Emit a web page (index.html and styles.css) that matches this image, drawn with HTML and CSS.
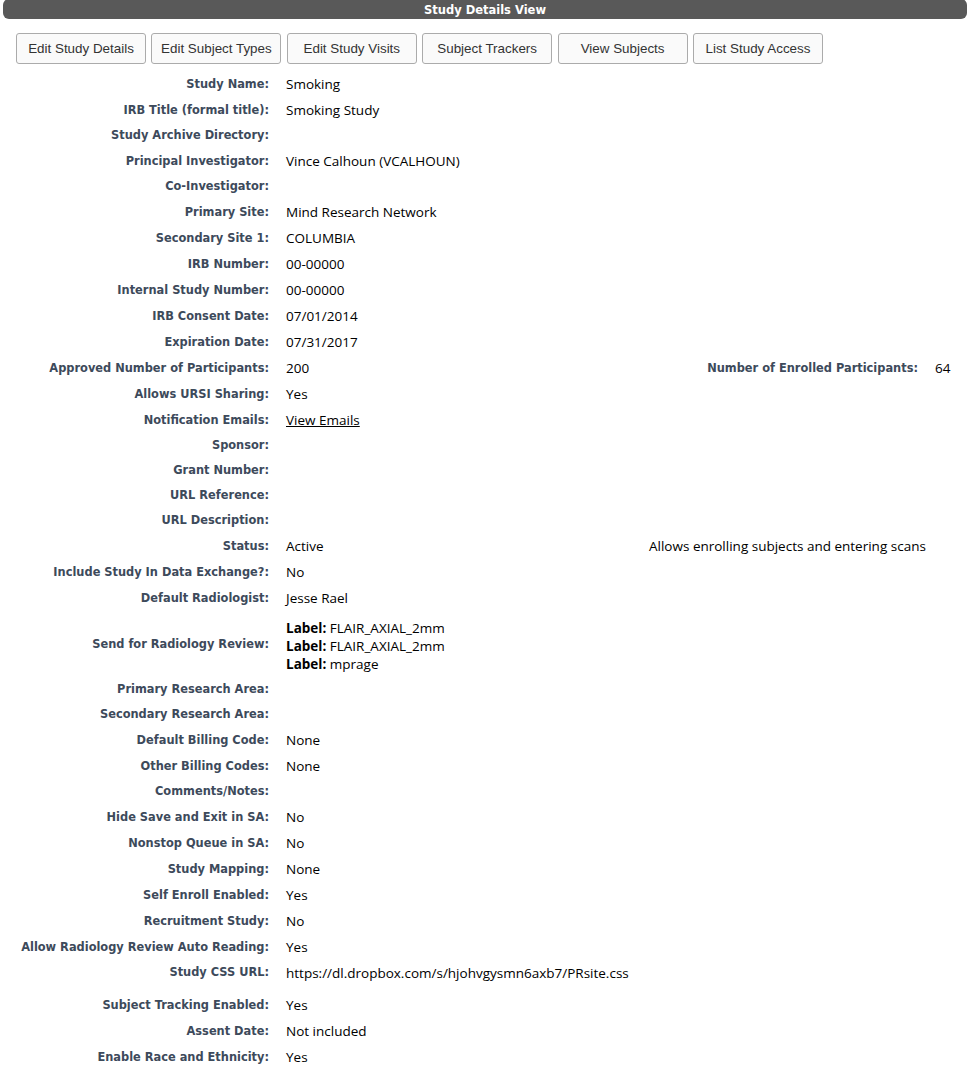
FILE: index.html
```html
<!DOCTYPE html>
<html lang="en">
<head>
	<meta charset="UTF-8">
	<title>Study Details View</title>
	<link rel="stylesheet" href="styles.css">
</head>
<body>
	<div class="page">
		<div class="titlebar">Study Details View</div>

		<div class="toolbar">
			<button class="btn">Edit Study Details</button>
			<button class="btn">Edit Subject Types</button>
			<button class="btn">Edit Study Visits</button>
			<button class="btn">Subject Trackers</button>
			<button class="btn">View Subjects</button>
			<button class="btn">List Study Access</button>
		</div>
	</div>

	<table class="details">
		<colgroup>
			<col class="c1">
			<col class="c2">
			<col class="c3">
			<col class="c4">
		</colgroup>
		<tr><th>Study Name:</th><td colspan="3">Smoking</td></tr>
		<tr><th>IRB Title (formal title):</th><td colspan="3">Smoking Study</td></tr>
		<tr><th>Study Archive Directory:</th><td colspan="3" class="empty"></td></tr>
		<tr><th>Principal Investigator:</th><td colspan="3">Vince Calhoun (VCALHOUN)</td></tr>
		<tr><th>Co-Investigator:</th><td colspan="3" class="empty"></td></tr>
		<tr><th>Primary Site:</th><td colspan="3">Mind Research Network</td></tr>
		<tr><th>Secondary Site 1:</th><td colspan="3">COLUMBIA</td></tr>
		<tr><th>IRB Number:</th><td colspan="3">00-00000</td></tr>
		<tr><th>Internal Study Number:</th><td colspan="3">00-00000</td></tr>
		<tr><th>IRB Consent Date:</th><td colspan="3">07/01/2014</td></tr>
		<tr><th>Expiration Date:</th><td colspan="3">07/31/2017</td></tr>
		<tr>
			<th>Approved Number of Participants:</th><td>200</td>
			<th>Number of Enrolled Participants:</th><td>64</td>
		</tr>
		<tr><th>Allows URSI Sharing:</th><td colspan="3">Yes</td></tr>
		<tr><th>Notification Emails:</th><td colspan="3"><a href="#" class="link">View Emails</a></td></tr>
		<tr><th>Sponsor:</th><td colspan="3" class="empty"></td></tr>
		<tr><th>Grant Number:</th><td colspan="3" class="empty"></td></tr>
		<tr><th>URL Reference:</th><td colspan="3" class="empty"></td></tr>
		<tr><th>URL Description:</th><td colspan="3" class="empty"></td></tr>
		<tr><th>Status:</th><td>Active</td><td colspan="2" class="note">Allows enrolling subjects and entering scans</td></tr>
		<tr><th>Include Study In Data Exchange?:</th><td colspan="3">No</td></tr>
		<tr><th>Default Radiologist:</th><td colspan="3">Jesse Rael</td></tr>
		<tr>
			<th>Send for Radiology Review:</th>
			<td colspan="3" class="multi">
				<div><b>Label:</b> FLAIR_AXIAL_2mm</div>
				<div><b>Label:</b> FLAIR_AXIAL_2mm</div>
				<div><b>Label:</b> mprage</div>
			</td>
		</tr>
		<tr><th>Primary Research Area:</th><td colspan="3" class="empty"></td></tr>
		<tr><th>Secondary Research Area:</th><td colspan="3" class="empty"></td></tr>
		<tr><th>Default Billing Code:</th><td colspan="3">None</td></tr>
		<tr><th>Other Billing Codes:</th><td colspan="3">None</td></tr>
		<tr><th>Comments/Notes:</th><td colspan="3" class="empty"></td></tr>
		<tr><th>Hide Save and Exit in SA:</th><td colspan="3">No</td></tr>
		<tr><th>Nonstop Queue in SA:</th><td colspan="3">No</td></tr>
		<tr><th>Study Mapping:</th><td colspan="3">None</td></tr>
		<tr><th>Self Enroll Enabled:</th><td colspan="3">Yes</td></tr>
		<tr><th>Recruitment Study:</th><td colspan="3">No</td></tr>
		<tr><th>Allow Radiology Review Auto Reading:</th><td colspan="3">Yes</td></tr>
		<tr class="tall"><th>Study CSS URL:</th><td colspan="3">https://dl.dropbox.com/s/hjohvgysmn6axb7/PRsite.css</td></tr>
		<tr><th>Subject Tracking Enabled:</th><td colspan="3">Yes</td></tr>
		<tr><th>Assent Date:</th><td colspan="3">Not included</td></tr>
		<tr><th>Enable Race and Ethnicity:</th><td colspan="3">Yes</td></tr>
	</table>
</body>
</html>
```

FILE: styles.css
```css
*{
	margin: 0;
	padding: 0;
	box-sizing: border-box;
}
body{
	background: #fff;
	color: #000;
}
.page{
	padding: 0 2px 0 3px;
}
.titlebar{
	margin-top: -1px;
	height: 20px;
	background: #595959;
	border-radius: 6px;
	color: #fff;
	font: bold 11.5px/23px "DejaVu Sans", Verdana, sans-serif;
	text-align: center;
}
.toolbar{
	display: flex;
	gap: 5.4px;
	margin-top: 14px;
	padding-left: 13px;
}
.btn{
	width: 130px;
	height: 31px;
	border: 1px solid #ababab;
	border-radius: 3px;
	background: #fafafa;
	color: #333;
	font: 13.4px "Liberation Sans", Arial, sans-serif;
	cursor: pointer;
}
.details{
	width: 967px;
	margin-top: 7px;
	border-collapse: collapse;
	table-layout: fixed;
}
.details .c1{ width: 277px; }
.details .c2{ width: 363px; }
.details .c3{ width: 286px; }
.details .c4{ width: 41px; }
.details th{
	padding: 4px 8px;
	text-align: right;
	font: bold 11.4px/17px "DejaVu Sans", Verdana, sans-serif;
	color: #3d4a5b;
	white-space: nowrap;
}
.details td{
	padding: 4px 8px 4px 9px;
	font: 13.5px/18px "Open Sans", Tahoma, sans-serif;
	color: #000;
	text-align: left;
	white-space: nowrap;
}
.details td.empty{
	padding: 0;
}
.details td.multi{
	padding-top: 8px;
}
.details tr.tall th,
.details tr.tall td{
	vertical-align: top;
}
.details tr.tall td{
	padding-bottom: 10px;
}
.link{
	color: #000;
	text-decoration: underline;
}
```
